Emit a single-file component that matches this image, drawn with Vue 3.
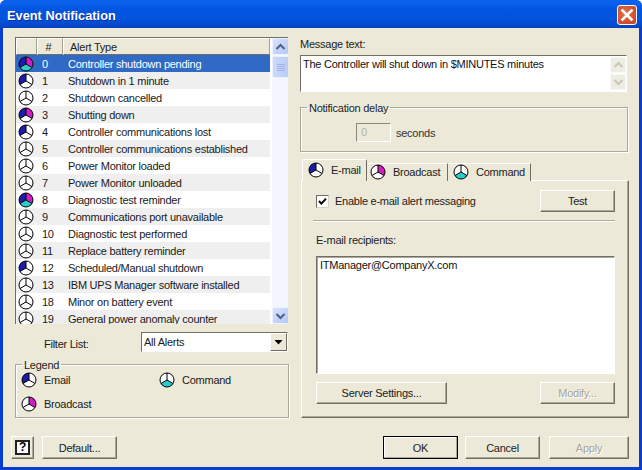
<script setup>
import { h } from 'vue'

const Pie = (props) => {
  const c = 8, r = 7
  const lx = c - r * 0.866, rx = c + r * 0.866, ly = c + r * 0.5
  const sector = (d, fill) => h('path', { d, fill, stroke: 'none' })
  const kids = [h('circle', { cx: c, cy: c, r, fill: '#fff' })]
  const f = props.f || ''
  if (f.includes('e')) kids.push(sector(`M${c} ${c}L${c} ${c - r}A${r} ${r} 0 0 0 ${lx} ${ly}Z`, '#1c1ca8'))
  if (f.includes('b')) kids.push(sector(`M${c} ${c}L${c} ${c - r}A${r} ${r} 0 0 1 ${rx} ${ly}Z`, '#d41cc4'))
  if (f.includes('c')) kids.push(sector(`M${c} ${c}L${lx} ${ly}A${r} ${r} 0 0 0 ${rx} ${ly}Z`, '#28cccc'))
  kids.push(h('circle', { cx: c, cy: c, r, fill: 'none', stroke: '#000', 'stroke-width': 1 }))
  kids.push(h('path', { d: `M${c} ${c - r}L${c} ${c}M${c} ${c}L${lx} ${ly}M${c} ${c}L${rx} ${ly}`, stroke: '#000', 'stroke-width': 1, fill: 'none' }))
  return h('svg', { width: 16, height: 16, viewBox: '0 0 16 16', style: 'display:block;flex:none' }, kids)
}
Pie.props = ['f']

const rows = [
  ['0', 'Controller shutdown pending', 'ebc'],
  ['1', 'Shutdown in 1 minute', 'e'],
  ['2', 'Shutdown cancelled', ''],
  ['3', 'Shutting down', 'eb'],
  ['4', 'Controller communications lost', 'e'],
  ['5', 'Controller communications established', ''],
  ['6', 'Power Monitor loaded', ''],
  ['7', 'Power Monitor unloaded', ''],
  ['8', 'Diagnostic test reminder', 'ebc'],
  ['9', 'Communications port unavailable', ''],
  ['10', 'Diagnostic test performed', ''],
  ['11', 'Replace battery reminder', ''],
  ['12', 'Scheduled/Manual shutdown', 'e'],
  ['13', 'IBM UPS Manager software installed', ''],
  ['18', 'Minor on battery event', ''],
  ['19', 'General power anomaly counter', ''],
]
</script>

<template>
  <div class="win">
    <header class="title">
      <span class="title-text">Event Notification</span>
      <div class="close">
        <svg width="20" height="20" viewBox="0 0 20 20"><path d="M5.5 5.5L14.5 14.5M14.5 5.5L5.5 14.5" stroke="#fff" stroke-width="2.6" stroke-linecap="square" /></svg>
      </div>
    </header>

    <div class="body">
      <div class="main">
        <section class="left">
          <div class="list">
            <div class="list-inner">
              <div class="list-head">
                <div class="hc hc-icon"></div>
                <div class="hc hc-num">#</div>
                <div class="hc hc-name">Alert Type</div>
              </div>
              <div v-for="(r, i) in rows" :key="r[0]" class="row" :class="{ sel: i === 0, alt: i % 2 === 1 }">
                <span class="cell-icon"><Pie :f="r[2]" /></span>
                <span class="cell-num">{{ r[0] }}</span>
                <span class="cell-name">{{ r[1] }}</span>
              </div>
            </div>
            <div class="vscroll">
              <div class="sb-btn">
                <svg width="11" height="8" viewBox="0 0 11 8"><path d="M1.5 6L5.5 2L9.5 6" fill="none" stroke="#4d6185" stroke-width="2" /></svg>
              </div>
              <div class="sb-thumb"><i></i><i></i><i></i><i></i></div>
              <div class="sb-track"></div>
              <div class="sb-btn">
                <svg width="11" height="8" viewBox="0 0 11 8"><path d="M1.5 2L5.5 6L9.5 2" fill="none" stroke="#4d6185" stroke-width="2" /></svg>
              </div>
            </div>
          </div>

          <div class="filter">
            <span class="filter-label">Filter List:</span>
            <div class="combo">
              <span class="combo-text">All Alerts</span>
              <div class="combo-btn"><svg width="9" height="5" viewBox="0 0 9 5"><path d="M0.5 0H8.5L4.5 4.5Z" fill="#000" /></svg></div>
            </div>
          </div>

          <fieldset class="group legend-box">
            <legend>Legend</legend>
            <div class="legend-grid">
              <div class="lg-item"><Pie f="e" /><span>Email</span></div>
              <div class="lg-item"><Pie f="c" /><span>Command</span></div>
              <div class="lg-item"><Pie f="b" /><span>Broadcast</span></div>
            </div>
          </fieldset>
        </section>

        <section class="right">
          <div class="msg-label">Message text:</div>
          <div class="msg-box">
            <div class="msg-text">The Controller will shut down in $MINUTES minutes</div>
            <div class="msg-scroll">
              <div class="dis-btn"><svg width="11" height="8" viewBox="0 0 11 8"><path d="M1.5 6L5.5 2L9.5 6" fill="none" stroke="#c9c7ba" stroke-width="2" /></svg></div>
              <div class="dis-btn"><svg width="11" height="8" viewBox="0 0 11 8"><path d="M1.5 2L5.5 6L9.5 2" fill="none" stroke="#c9c7ba" stroke-width="2" /></svg></div>
            </div>
          </div>

          <fieldset class="group delay">
            <legend>Notification delay</legend>
            <div class="delay-row">
              <div class="delay-input">0</div>
              <span class="delay-unit">seconds</span>
            </div>
          </fieldset>

          <div class="tabs">
            <div class="tab active"><Pie f="e" /><span>E-mail</span></div>
            <div class="tab tab-b"><Pie f="b" /><span>Broadcast</span></div>
            <div class="tab tab-c"><Pie f="c" /><span>Command</span></div>
          </div>
          <div class="panel">
            <div class="enable-row">
              <label class="check">
                <span class="check-box"><svg width="9" height="9" viewBox="0 0 9 9"><path d="M1 4L3.4 6.6L8 1.6" fill="none" stroke="#000" stroke-width="2" /></svg></span>
                <span>Enable e-mail alert messaging</span>
              </label>
              <div class="btn btn-test">Test</div>
            </div>
            <div class="sep"></div>
            <div class="rcpt-label">E-mail recipients:</div>
            <div class="rcpt-box">ITManager@CompanyX.com</div>
            <div class="panel-btns">
              <div class="btn btn-server">Server Settings...</div>
              <div class="btn btn-test disabled">Modify...</div>
            </div>
          </div>
        </section>
      </div>

      <footer class="foot">
        <div class="btn btn-help"><span class="help-mark">?</span></div>
        <div class="btn btn-std">Default...</div>
        <div class="spacer"></div>
        <div class="btn btn-std default">OK</div>
        <div class="btn btn-std">Cancel</div>
        <div class="btn btn-apply disabled">Apply</div>
      </footer>
    </div>
  </div>
</template>

<style>
html, body { margin: 0; padding: 0; overflow: hidden; background: #fff; }
</style>

<style scoped>
* { box-sizing: border-box; }
.win {
  width: 642px;
  height: 470px;
  display: flex;
  flex-direction: column;
  font-family: "Liberation Sans", Arial, sans-serif;
  font-size: 11px;
  letter-spacing: -0.25px;
  color: #1a1a1a;
  background: #0a3cd0;
  border-radius: 6px 6px 0 0;
  overflow: hidden;
}
.title {
  height: 28px;
  flex: none;
  display: flex;
  align-items: center;
  justify-content: space-between;
  padding: 2px 5px 0 7px;
  background: linear-gradient(180deg, #0a5fe8 0%, #0a62f0 10%, #0356e2 30%, #0352de 70%, #0548c8 92%, #0440b8 100%);
}
.title-text {
  color: #fff;
  font-weight: 700;
  font-size: 12.8px;
  letter-spacing: 0;
  text-shadow: 1px 1px 0 #0a2f98;
}
.close {
  width: 20px;
  height: 20px;
  border: 1px solid #fff;
  border-radius: 3px;
  background: radial-gradient(circle at 40% 40%, #e0704e, #cf4a2a 75%);
  display: flex;
  align-items: center;
  justify-content: center;
}
.close svg { margin: -1px; }
.body {
  flex: 1;
  margin: 0 3px 3px;
  background: #ece9d8;
  padding: 9px 10px 0 8px;
  display: flex;
  flex-direction: column;
}
.main {
  display: flex;
  gap: 11px;
  padding-left: 4px;
  height: 381px;
}
.left { width: 274px; flex: none; display: flex; flex-direction: column; }
.right { width: 329px; flex: none; display: flex; flex-direction: column; }

/* list */
.list {
  height: 287px;
  display: flex;
  background: #fff;
  border-top: 1px solid #716f64;
  border-left: 1px solid #716f64;
  width: 273px;
  overflow: hidden;
  padding-right: 1px;
}
.list-inner { width: 254px; flex: none; overflow: hidden; }
.list-head { display: flex; height: 17px; }
.hc {
  background: #ece9d8;
  border-top: 1px solid #fff;
  border-left: 1px solid #fff;
  border-right: 1px solid #a3a090;
  border-bottom: 1px solid #716f64;
  line-height: 16px;
  color: #222;
}
.hc-icon { width: 21px; }
.hc-num { width: 26px; text-align: center; padding-right: 3px; }
.hc-name { flex: 1; padding-left: 6px; }
.row { display: flex; align-items: center; height: 17px; white-space: nowrap; background: #fff; }
.row.alt { background: #efefef; }
.row.sel { background: #316ac5; color: #fff; }
.cell-icon { width: 26px; padding-left: 2px; flex: none; }
.cell-num { width: 26px; flex: none; }
.cell-name { flex: 1; }

.vscroll {
  width: 17px;
  margin-left: 2px;
  flex: none;
  display: flex;
  flex-direction: column;
  background: #f4f6fd;
}
.sb-btn {
  height: 17px;
  flex: none;
  display: flex;
  align-items: center;
  justify-content: center;
  background: linear-gradient(135deg, #d8e3fd, #b4c7f5);
  border: 1px solid #eef2fe;
  border-radius: 2px;
}
.sb-thumb {
  height: 22px;
  flex: none;
  margin-top: 1px;
  display: flex;
  flex-direction: column;
  align-items: center;
  justify-content: center;
  gap: 1px;
  background: linear-gradient(90deg, #ccd9fb, #bccdf8);
  border: 1px solid #eef2fe;
  border-radius: 2px;
}
.sb-thumb i { display: block; width: 8px; height: 1px; background: #a0b3e8; }
.sb-track { flex: 1; }

/* filter */
.filter { display: flex; align-items: center; margin-top: 8px; height: 20px; }
.filter-label { width: 126px; padding-left: 29px; padding-top: 4px; }
.combo {
  width: 147px;
  height: 20px;
  display: flex;
  align-items: center;
  justify-content: space-between;
  background: #fff;
  border-top: 1px solid #716f64;
  border-left: 1px solid #716f64;
  border-right: 1px solid #fff;
  border-bottom: 1px solid #fff;
  padding-left: 2px;
}
.combo-btn {
  width: 17px;
  height: 18px;
  background: #ece9d8;
  border-top: 1px solid #fff;
  border-left: 1px solid #fff;
  border-right: 1px solid #716f64;
  border-bottom: 1px solid #716f64;
  display: flex;
  align-items: center;
  justify-content: center;
}

/* fieldset */
.group {
  margin: 0;
  min-width: 0;
  padding: 0;
  border: 1px solid #aca899;
  box-shadow: 1px 1px 0 #fff, inset 1px 1px 0 #fff;
}
.group legend { padding: 0 2px; margin-left: 6px; line-height: 14px; color: #222; position: relative; top: 1px; }
.legend-box { margin-top: 5px; height: 61px; width: 274px; }
.legend-grid {
  display: grid;
  grid-template-columns: 138px 1fr;
  grid-auto-rows: 24px;
  padding: 0 0 0 5px;
  margin-top: -1px;
}
.lg-item { display: flex; align-items: center; gap: 7px; height: 20px; }

/* message */
.msg-label { height: 18px; line-height: 14px; color: #222; }
.msg-box {
  height: 37px;
  width: 327px;
  display: flex;
  background: #fff;
  border-top: 1px solid #716f64;
  border-left: 1px solid #716f64;
  border-right: 1px solid #fff;
  border-bottom: 1px solid #fff;
}
.msg-text { flex: 1; padding: 1px 2px; line-height: 15px; color: #111; }
.msg-scroll { width: 16px; flex: none; display: flex; flex-direction: column; gap: 1px; padding: 1px 0; }
.dis-btn {
  flex: 1;
  background: #eeede4;
  border: 1px solid #f8f8f4;
  display: flex;
  align-items: center;
  justify-content: center;
}

.delay { margin-top: 8px; height: 52px; width: 328px; }
.delay-row { display: flex; align-items: center; padding: 9px 0 0 55px; }
.delay-input {
  width: 35px;
  height: 19px;
  padding-left: 4px;
  line-height: 17px;
  color: #b5b2a0;
  border-top: 1px solid #8a8878;
  border-left: 1px solid #8a8878;
  border-right: 1px solid #fff;
  border-bottom: 1px solid #fff;
}
.delay-unit { margin-left: 5px; color: #333; }

/* tabs */
.tabs { display: flex; align-items: flex-end; height: 21px; margin-top: 8px; padding-left: 2px; position: relative; z-index: 1; margin-bottom: -1px; }
.tab {
  height: 18px;
  display: flex;
  align-items: center;
  background: #ece9d8;
  border-top: 1px solid #fff;
  border-right: 1px solid #716f64;
  white-space: nowrap;
  color: #222;
  padding-bottom: 1px;
}
.tab.active {
  width: 65px;
  height: 22px;
  padding-left: 5px;
  gap: 7px;
  padding-bottom: 2px;
  border-left: 1px solid #fff;
  border-radius: 2px 2px 0 0;
}
.tab-b { width: 80px; margin-left: 1px; padding-left: 2px; gap: 7px; }
.tab-c { width: 83px; padding-left: 5px; gap: 7px; }
.panel {
  flex: 1;
  margin: 0;
  border-top: 1px solid #fff;
  border-left: 1px solid #fff;
  border-right: 1px solid #716f64;
  border-bottom: 1px solid #716f64;
  box-shadow: inset -1px -1px 0 #aca899;
  margin-left: 1px;
  padding: 9px 13px 12px 14px;
  display: flex;
  flex-direction: column;
}
.enable-row { display: flex; align-items: center; justify-content: space-between; height: 22px; }
.check { display: flex; align-items: center; gap: 6px; color: #222; }
.check-box {
  width: 13px;
  height: 13px;
  background: #fff;
  border-top: 1px solid #716f64;
  border-left: 1px solid #716f64;
  border-right: 1px solid #d8d5c6;
  border-bottom: 1px solid #d8d5c6;
  display: flex;
  align-items: center;
  justify-content: center;
}
.sep { height: 2px; margin: 8px 0 0 -3px; border-top: 1px solid #aca899; border-bottom: 1px solid #fff; }
.rcpt-label { margin-top: 11px; height: 23px; line-height: 14px; color: #222; }
.rcpt-box {
  height: 118px;
  background: #fff;
  border-top: 1px solid #716f64;
  border-left: 1px solid #716f64;
  border-right: 1px solid #fff;
  border-bottom: 1px solid #fff;
  box-shadow: inset 1px 1px 0 #aca899;
  padding: 1px 3px;
  line-height: 14px;
  color: #111;
}
.panel-btns { display: flex; justify-content: space-between; margin-top: 8px; }

/* buttons */
.btn {
  display: flex;
  align-items: center;
  justify-content: center;
  background: #ece9d8;
  border-top: 1px solid #fff;
  border-left: 1px solid #fff;
  border-right: 1px solid #716f64;
  border-bottom: 1px solid #716f64;
  box-shadow: inset -1px -1px 0 #aca899;
  color: #222;
  white-space: nowrap;
}
.btn-test { width: 75px; height: 22px; }
.btn-server { width: 131px; height: 22px; }
.btn-std { width: 75px; height: 23px; }
.btn-apply { width: 80px; height: 23px; margin-left: 1px; }
.btn-help { width: 23px; height: 23px; }
.btn.disabled { color: #a8a594; text-shadow: 1px 1px 0 #fff; }
.btn.default { border: 1px solid #000; box-shadow: inset -1px -1px 0 #aca899, inset 1px 1px 0 #fff; }
.help-mark {
  width: 15px;
  height: 15px;
  border: 2px solid #222;
  background: #fff;
  font-weight: 700;
  font-size: 12px;
  line-height: 11px;
  text-align: center;
  color: #000;
}
.foot {
  height: 23px;
  margin-top: 18px;
  display: flex;
  gap: 8px;
}
.foot .btn-std + .btn-std { margin-left: -1px; }
.spacer { flex: 1; }
</style>
